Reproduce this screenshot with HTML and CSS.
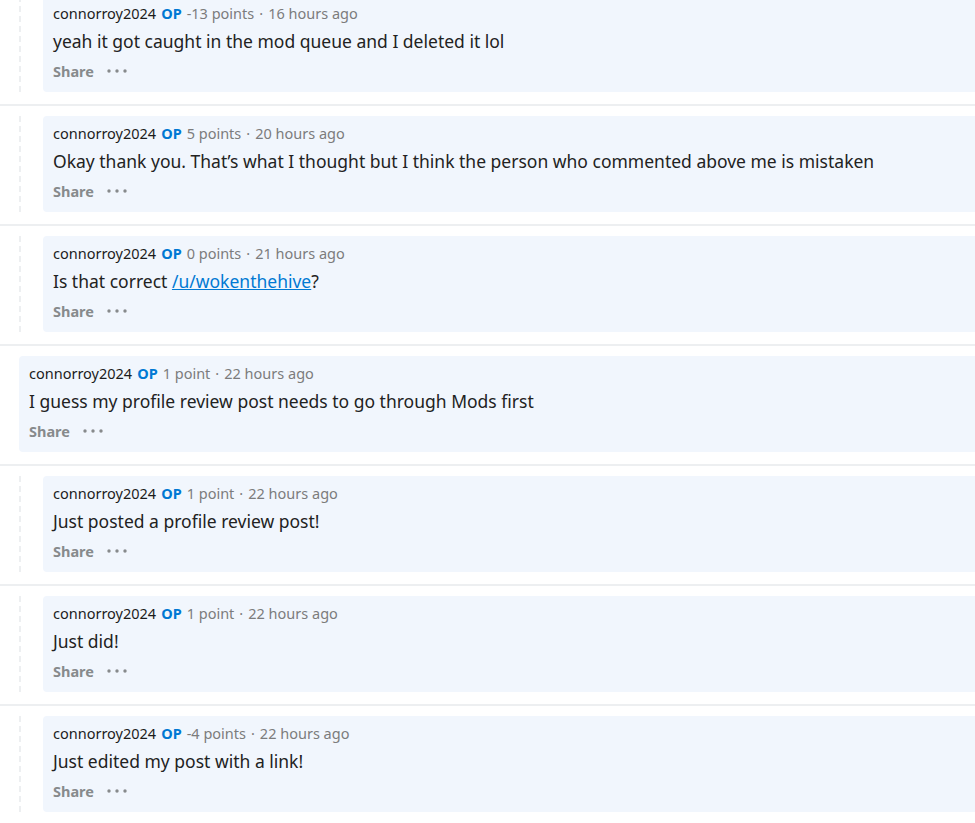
FILE: index.html
```html
<!DOCTYPE html>
<html>
<head>
<meta charset="utf-8">
<link rel="stylesheet" href="styles.css">
</head>
<body>
<div class="thread">
  <div class="row nested">
    <div class="thread-line"></div>
    <div class="card">
      <div class="meta"><span class="user">connorroy2024</span><span class="op">OP</span><span class="info">-13 points<span class="sep">·</span>16 hours ago</span></div>
      <div class="body">yeah it got caught in the mod queue and I deleted it lol</div>
      <div class="actions"><span class="share">Share</span><svg class="dots" width="20" height="6" viewBox="0 0 20 6"><circle cx="2" cy="3" r="1.7"/><circle cx="10" cy="3" r="1.7"/><circle cx="18" cy="3" r="1.7"/></svg></div>
    </div>
  </div>
  <div class="row nested">
    <div class="thread-line"></div>
    <div class="card">
      <div class="meta"><span class="user">connorroy2024</span><span class="op">OP</span><span class="info">5 points<span class="sep">·</span>20 hours ago</span></div>
      <div class="body">Okay thank you. That’s what I thought but I think the person who commented above me is mistaken</div>
      <div class="actions"><span class="share">Share</span><svg class="dots" width="20" height="6" viewBox="0 0 20 6"><circle cx="2" cy="3" r="1.7"/><circle cx="10" cy="3" r="1.7"/><circle cx="18" cy="3" r="1.7"/></svg></div>
    </div>
  </div>
  <div class="row nested">
    <div class="thread-line"></div>
    <div class="card">
      <div class="meta"><span class="user">connorroy2024</span><span class="op">OP</span><span class="info">0 points<span class="sep">·</span>21 hours ago</span></div>
      <div class="body">Is that correct <a class="link" href="#">/u/wokenthehive</a>?</div>
      <div class="actions"><span class="share">Share</span><svg class="dots" width="20" height="6" viewBox="0 0 20 6"><circle cx="2" cy="3" r="1.7"/><circle cx="10" cy="3" r="1.7"/><circle cx="18" cy="3" r="1.7"/></svg></div>
    </div>
  </div>
  <div class="row">
    <div class="card">
      <div class="meta"><span class="user">connorroy2024</span><span class="op">OP</span><span class="info">1 point<span class="sep">·</span>22 hours ago</span></div>
      <div class="body">I guess my profile review post needs to go through Mods first</div>
      <div class="actions"><span class="share">Share</span><svg class="dots" width="20" height="6" viewBox="0 0 20 6"><circle cx="2" cy="3" r="1.7"/><circle cx="10" cy="3" r="1.7"/><circle cx="18" cy="3" r="1.7"/></svg></div>
    </div>
  </div>
  <div class="row nested">
    <div class="thread-line"></div>
    <div class="card">
      <div class="meta"><span class="user">connorroy2024</span><span class="op">OP</span><span class="info">1 point<span class="sep">·</span>22 hours ago</span></div>
      <div class="body">Just posted a profile review post!</div>
      <div class="actions"><span class="share">Share</span><svg class="dots" width="20" height="6" viewBox="0 0 20 6"><circle cx="2" cy="3" r="1.7"/><circle cx="10" cy="3" r="1.7"/><circle cx="18" cy="3" r="1.7"/></svg></div>
    </div>
  </div>
  <div class="row nested">
    <div class="thread-line"></div>
    <div class="card">
      <div class="meta"><span class="user">connorroy2024</span><span class="op">OP</span><span class="info">1 point<span class="sep">·</span>22 hours ago</span></div>
      <div class="body">Just did!</div>
      <div class="actions"><span class="share">Share</span><svg class="dots" width="20" height="6" viewBox="0 0 20 6"><circle cx="2" cy="3" r="1.7"/><circle cx="10" cy="3" r="1.7"/><circle cx="18" cy="3" r="1.7"/></svg></div>
    </div>
  </div>
  <div class="row nested last">
    <div class="thread-line"></div>
    <div class="card">
      <div class="meta"><span class="user">connorroy2024</span><span class="op">OP</span><span class="info">-4 points<span class="sep">·</span>22 hours ago</span></div>
      <div class="body">Just edited my post with a link!</div>
      <div class="actions"><span class="share">Share</span><svg class="dots" width="20" height="6" viewBox="0 0 20 6"><circle cx="2" cy="3" r="1.7"/><circle cx="10" cy="3" r="1.7"/><circle cx="18" cy="3" r="1.7"/></svg></div>
    </div>
  </div>
</div>
</body>
</html>
```
FILE: styles.css
```css
html, body {
  margin: 0;
  padding: 0;
  background: #ffffff;
}
body {
  font-family: "Noto Sans", "Open Sans", sans-serif;
  color: #1c1c1c;
  overflow: hidden;
}
.thread {
  margin-top: -14px;
  display: flex;
  flex-direction: column;
}
.row {
  display: flex;
  align-items: stretch;
  padding: 10px 0 12px 19px;
  border-bottom: 2px solid #edeff1;
}
.row.last {
  border-bottom: none;
}
.thread-line {
  width: 0;
  border-left: 2px dashed #edeff1;
  margin-right: 22px;
}
.card {
  flex: 1;
  height: 96px;
  box-sizing: border-box;
  background: #f1f6fd;
  border-radius: 4px 0 0 4px;
  padding: 7px 10px 0 10px;
}
.meta {
  font-size: 14.5px;
  line-height: 20px;
  height: 20px;
  white-space: nowrap;
}
.user {
  color: #1c1c1c;
}
.op {
  color: #0079d3;
  font-weight: 700;
  margin-left: 5px;
}
.info {
  color: #7c7c7c;
  margin-left: 5px;
}
.sep {
  margin: 0 5px;
}
.body {
  font-size: 17.5px;
  line-height: 24px;
  margin-top: 6px;
  color: #222222;
  white-space: nowrap;
}
.link {
  color: #0079d3;
  text-decoration: underline;
}
.actions {
  display: flex;
  align-items: center;
  margin-top: 10px;
  height: 16px;
}
.share {
  font-size: 14.5px;
  font-weight: 700;
  color: #878a8c;
  line-height: 16px;
}
.dots {
  margin-left: 13px;
  fill: #878a8c;
}
```
